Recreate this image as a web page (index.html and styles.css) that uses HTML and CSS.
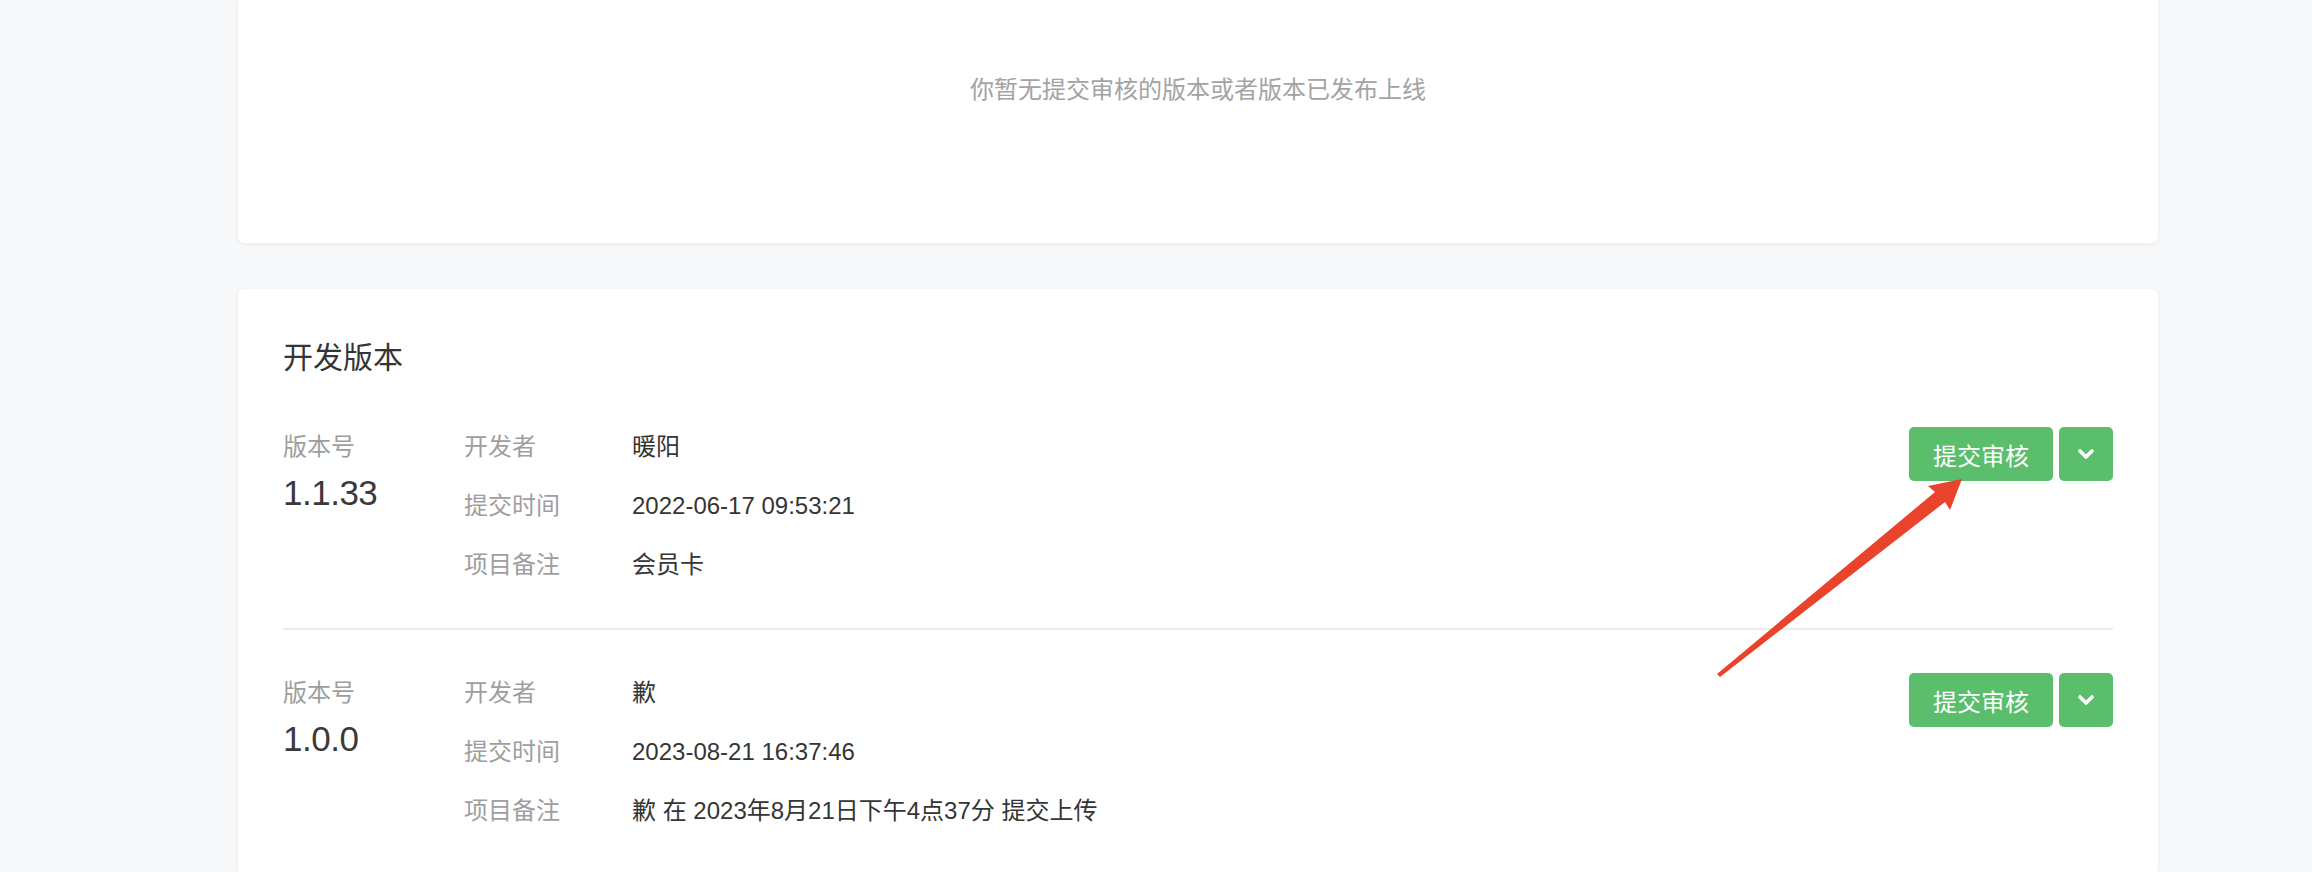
FILE: index.html
```html
<!DOCTYPE html>
<html lang="zh-CN">
<head>
<meta charset="utf-8">
<title>版本管理</title>
<link rel="stylesheet" href="styles.css">
</head>
<body>
<div class="page">
  <section class="card card-empty">
    <p class="empty">你暂无提交审核的版本或者版本已发布上线</p>
  </section>

  <section class="card card-dev">
    <h2 class="card-title">开发版本</h2>

    <div class="ver-row">
      <div class="ver-col">
        <div class="ver-label">版本号</div>
        <div class="ver-num">1.1.33</div>
      </div>
      <dl class="info">
        <div class="info-item"><dt>开发者</dt><dd>暖阳</dd></div>
        <div class="info-item"><dt>提交时间</dt><dd>2022-06-17 09:53:21</dd></div>
        <div class="info-item"><dt>项目备注</dt><dd>会员卡</dd></div>
      </dl>
      <div class="actions">
        <button class="btn-main">提交审核</button>
        <button class="btn-more" aria-label="更多"><svg viewBox="0 0 16 10" width="16" height="10"><path d="M2 2 L8 8 L14 2" fill="none" stroke="#fff" stroke-width="3.6" stroke-linecap="round" stroke-linejoin="round"/></svg></button>
      </div>
    </div>

    <div class="ver-row">
      <div class="ver-col">
        <div class="ver-label">版本号</div>
        <div class="ver-num">1.0.0</div>
      </div>
      <dl class="info">
        <div class="info-item"><dt>开发者</dt><dd>歉</dd></div>
        <div class="info-item"><dt>提交时间</dt><dd>2023-08-21 16:37:46</dd></div>
        <div class="info-item"><dt>项目备注</dt><dd>歉 在 2023年8月21日下午4点37分 提交上传</dd></div>
      </dl>
      <div class="actions">
        <button class="btn-main">提交审核</button>
        <button class="btn-more" aria-label="更多"><svg viewBox="0 0 16 10" width="16" height="10"><path d="M2 2 L8 8 L14 2" fill="none" stroke="#fff" stroke-width="3.6" stroke-linecap="round" stroke-linejoin="round"/></svg></button>
      </div>
    </div>
  </section>
</div>

<svg class="arrow" viewBox="0 0 2312 872" width="2312" height="872">
  <polygon points="1717,674 1935,492 1928,486 1962,479 1950,510 1945,502 1720,677" fill="#e9432b"/>
</svg>
</body>
</html>
```

FILE: styles.css
```css
html, body {
  margin: 0;
  padding: 0;
  overflow: hidden;
}

body {
  background: #f7f8fa;
  font-family: "Liberation Sans", "Noto Sans CJK SC", sans-serif;
  color: #353535;
  position: relative;
  width: 2312px;
  height: 872px;
}

.page {
  display: flex;
  flex-direction: column;
  gap: 46px;
  margin-left: 238px;
  width: 1920px;
}

.card {
  background: #fff;
  border-radius: 6px;
  box-shadow: 0 1px 4px rgba(0, 0, 0, 0.07);
}

.card-empty {
  height: 243px;
  box-sizing: border-box;
  border-radius: 0 0 6px 6px;
  padding-top: 72px;
}

.empty {
  margin: 0;
  text-align: center;
  font-size: 24px;
  line-height: 36px;
  color: #a3a3a3;
}

.card-dev {
  padding: 46px 45px 0;
}

.card-title {
  margin: 0 0 4px;
  font-size: 30px;
  line-height: 45px;
  font-weight: normal;
  color: #353535;
}

.ver-row {
  display: flex;
  align-items: flex-start;
  padding: 45px 0;
}

.ver-row + .ver-row {
  border-top: 2px solid #ececec;
}

.ver-col {
  width: 181px;
  flex: none;
}

.ver-label {
  font-size: 24px;
  line-height: 36px;
  color: #9e9e9e;
}

.ver-num {
  font-size: 35px;
  line-height: 56px;
  color: #3a3a3a;
  letter-spacing: -0.5px;
}

.info {
  margin: 0;
  flex: 1;
  display: flex;
  flex-direction: column;
  gap: 23px;
}

.info-item {
  display: flex;
  font-size: 24px;
  line-height: 36px;
}

.info-item dt {
  width: 168px;
  flex: none;
  color: #9e9e9e;
}

.info-item dd {
  margin: 0;
  color: #353535;
}

.actions {
  display: flex;
  gap: 6px;
  margin-top: -2px;
}

.btn-main,
.btn-more {
  border: none;
  background: #5abe6c;
  color: #fff;
  border-radius: 5px;
  height: 54px;
  font-family: inherit;
  padding: 0;
  cursor: pointer;
  display: flex;
  align-items: center;
  justify-content: center;
}

.btn-main {
  width: 144px;
  font-size: 24px;
}

.btn-more {
  width: 54px;
}

.arrow {
  position: absolute;
  left: 0;
  top: 0;
  pointer-events: none;
}
```
